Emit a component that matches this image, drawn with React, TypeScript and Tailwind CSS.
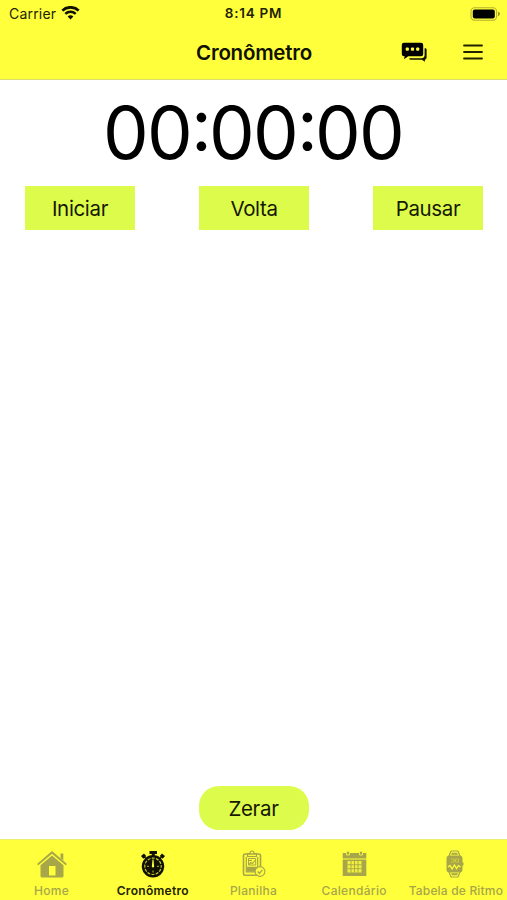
import type { ReactNode } from "react";

const GREY = "#a7a648";

function Wifi() {
  return (
    <svg width="19" height="15" viewBox="0 0 19 15" fill="none" stroke="#111100" className="ml-[5px]">
      <path d="M1.3 4.6a11.8 11.8 0 0 1 16.4 0" strokeWidth="2.7" />
      <path d="M4.3 7.9a7.5 7.5 0 0 1 10.4 0" strokeWidth="2.5" />
      <path d="M9.5 13.500 6.600 10.600a4.100 4.100 0 0 1 5.800 0z" fill="#111100" stroke="none" />
    </svg>
  );
}

function Battery() {
  return (
    <svg width="31" height="14" viewBox="0 0 31 14">
      <rect x="1" y="0.8" width="25.6" height="12.4" rx="3.6" fill="none" stroke="#b5b42c" strokeWidth="1.1" />
      <rect x="2.8" y="2.6" width="22" height="8.8" rx="1.8" fill="#000" />
      <path d="M28 4.8q2 .6 2 2.2t-2 2.2z" fill="#9b9a2c" />
    </svg>
  );
}

function Chat() {
  return (
    <svg width="26" height="20" viewBox="0 0 26 20">
      <path d="M3 .8h17q2.200 0 2.200 2.200v9q0 2.200-2.200 2.200H7.200L3 17.200l.7-3H3Q.8 14.200.8 12V3Q.8.8 3 .8z" fill="#000" />
      <path d="M23.600 6.200h1q1 .2 1 1.300v8q0 2-1.800 2.200l.3 2-3.400-2H9.800q-1.500 0-1.600-1.500h12.900q2.500-.2 2.500-2.600z" fill="#111100" />
      <g fill="#ffff3c">
        <rect x="4.700" y="5.500" width="3.200" height="3.200" rx="1" />
        <rect x="9.900" y="5.500" width="3.200" height="3.200" rx="1" />
        <rect x="15.100" y="5.500" width="3.200" height="3.200" rx="1" />
      </g>
    </svg>
  );
}

function Menu() {
  return (
    <svg width="20" height="16" viewBox="0 0 20 16" stroke="#222200" strokeWidth="1.8" strokeLinecap="round">
      <path d="M1 1.500h18M1 8h18M1 14.500h18" />
    </svg>
  );
}

function Home() {
  return (
    <svg width="32" height="28" viewBox="0 0 32 28" fill={GREY}>
      <path d="M1 14 16 1l15 13-1.300 1.300L16 3.700 2.300 15.300z" />
      <path d="M24.500 3.500h2.800v7l-2.800-2.400z" />
      <path d="M4.500 15.200 16 5.500l11.500 9.700V26q0 1.600-1.600 1.600H6.100q-1.600 0-1.600-1.600z" />
      <path d="M13 16h6.500v9.500H13z" fill="#ffff3c" />
    </svg>
  );
}

function Stopwatch() {
  return (
    <svg width="26" height="28" viewBox="0 0 26 28">
      <path d="M9.500 1h7.500v3h-2.200v2h-3V4H9.500z" fill="#111100" />
      <path d="m1 6 3-2.500L6.200 6 3.300 8.700zM25 6l-3-2.500L19.800 6l2.900 2.700z" fill="#111100" />
      <path d="m3.500 6 3 3M22.500 6l-3 3" stroke="#111100" strokeWidth="1.500" />
      <circle cx="13" cy="16.300" r="11.200" fill="#111100" />
      <circle cx="13" cy="16.300" r="8.200" fill="none" stroke="#c4c430" strokeWidth="1.200" strokeDasharray="3 1.293" strokeDashoffset="1.500" />
      <path d="M12.500 9.500h1l.6 6.800-1.100 1.600-1.100-1.600z" fill="#ffff3c" />
      <path d="M13 20.500v2M7 16.300h2M17 16.300h2" stroke="#b5b52a" />
    </svg>
  );
}

function Clipboard() {
  return (
    <svg width="24" height="28" viewBox="0 0 24 28" fill="none" stroke={GREY}>
      <path d="M16 25.300H3q-1.500 0-1.500-1.500V5.500Q1.500 4 3 4h14q1.500 0 1.500 1.500V17" strokeWidth="1.600" />
      <path d="M5.500 3.500h2.300q.2-2.500 2.200-2.500t2.200 2.500h2.300v3h-9z" strokeWidth="1.200" />
      <path d="M4.300 7v15h10M15.700 7v10" strokeWidth="1.200" />
      <path d="M5 16.800h10v2l-1.500 3H5z" fill={GREY} stroke="none" />
      <path d="M6.500 8.500h7.200v6.500H6.500z" strokeWidth="1" />
      <path d="m7 14.500 2-2 1.500 1 3-3.500M7 10.500h3" strokeWidth="1.100" />
      <circle cx="18" cy="21.500" r="4.900" fill="#ffff3c" strokeWidth="1.100" />
      <path d="m15.700 21.500 1.700 1.900 3-3.600" strokeWidth="1.300" />
    </svg>
  );
}

function Calendar() {
  return (
    <svg width="25" height="27" viewBox="0 0 25 27">
      <path d="M.7 3h23.600v5.600H.7zM.7 9.600h23.600V26H.7z" fill={GREY} />
      <path d="M5.500 11h14v11.500h-14z" fill="#f1f03e" />
      <path d="M5.500 14.800h14M5.500 18.700h14M9 11v11.500M12.500 11v11.500M16 11v11.500" stroke={GREY} strokeWidth=".9" />
      <path d="M4.500 5V2.500a1.500 1.500 0 0 1 3 0V5zM17.500 5V2.500a1.500 1.500 0 0 1 3 0V5z" fill={GREY} stroke="#ffff3c" strokeWidth=".8" />
    </svg>
  );
}

function Watch() {
  return (
    <svg width="19" height="28" viewBox="0 0 19 28">
      <path d="M4 6 5.800 1.500Q6 1 7 1h5q1 0 1.200.5L15 6M4 22l1.800 4.500q.2.500 1.200.5h5q1 0 1.200-.5L15 22" fill="none" stroke={GREY} strokeWidth="1.200" />
      <path d="M6 4.700 7 2.800h5l1 1.900zM6 23.300l1 1.900h5l1-1.900z" fill={GREY} />
      <rect x="1.500" y="5.500" width="16" height="17" rx="3" fill={GREY} />
      <path d="M17 12.500h1.500v3H17z" fill={GREY} />
      <path d="M6 9h3v3H6M10.500 9h3v3h-3z" fill="none" stroke="#d7d63d" strokeWidth=".8" />
      <path d="m3 17 2-1.500 2 3.500 2.500-4 2 3.500 2-3 2 1.500" fill="none" stroke="#ffff3c" strokeWidth="1.200" />
    </svg>
  );
}

function Tab({ icon, label, text }: { icon: ReactNode; label: string; text: string }) {
  return (
    <div className="flex w-[100.7px] shrink-0 flex-col items-center">
      <div className="flex h-[44px] items-center pt-[3px]">{icon}</div>
      <span className={`whitespace-nowrap text-[12px] leading-[14px] ${text}`}>{label}</span>
    </div>
  );
}

function ActionButton({ children, className = "" }: { children: ReactNode; className?: string }) {
  return (
    <button className={`flex h-[44px] w-[110px] items-center justify-center bg-[#ddfb4b] pt-[2px] text-[20.500px] leading-none tracking-[-0.350px] text-[#151900] ${className}`}>
      {children}
    </button>
  );
}

function Digits({ value }: { value: string }) {
  return <span className="flex w-[90px] justify-center tracking-[-1.700px]">{value}</span>;
}

function Colon() {
  return <span className="mr-px -ml-px flex w-[16px] justify-center pb-[16px] tracking-[-5px]">:</span>;
}

export default function App() {
  return (
    <div className="flex h-[900px] w-[507px] flex-col overflow-hidden bg-white font-['Inter','Liberation_Sans',sans-serif]">
      <header className="h-[80px] border-b border-[#dcdc70] bg-[#ffff3c]">
        <div className="grid h-[27px] grid-cols-3 items-center text-[#222200]">
          <div className="flex items-center pl-[9px]">
            <span className="text-[14px] tracking-[0.200px]">Carrier</span>
            <Wifi />
          </div>
          <span className="text-center text-[13.500px] font-semibold tracking-[0.750px]">8:14 PM</span>
          <div className="flex justify-end pr-[6px]"><Battery /></div>
        </div>
        <div className="grid h-[50px] grid-cols-3 items-center">
          <h1 className="col-start-2 pt-[2px] pl-px text-center text-[20.500px] font-semibold tracking-[-0.250px] text-[#111100]">Cronômetro</h1>
          <div className="flex items-center justify-end gap-[36px] pr-[24px]">
            <Chat />
            <Menu />
          </div>
        </div>
      </header>
      <main className="flex flex-1 flex-col items-center">
        <div className="mt-[17px] flex h-[72px] items-center justify-center pr-px text-[72.500px] leading-[72px] text-black">
          <Digits value="00" />
          <Colon />
          <Digits value="00" />
          <Colon />
          <Digits value="00" />
        </div>
        <div className="mt-[17px] flex w-full justify-between pr-[24px] pl-[25px]">
          <ActionButton>Iniciar</ActionButton>
          <ActionButton>Volta</ActionButton>
          <ActionButton>Pausar</ActionButton>
        </div>
        <ActionButton className="mt-auto mb-[9px] rounded-[20px]">Zerar</ActionButton>
      </main>
      <nav className="flex h-[61px] justify-center border-t border-[#eded70] bg-[#ffff3c]">
        <Tab icon={<Home />} label="Home" text="font-medium tracking-[0.300px] text-[#a7a648] pr-px" />
        <Tab icon={<Stopwatch />} label="Cronômetro" text="font-semibold tracking-[0.300px] text-[#222200]" />
        <Tab icon={<Clipboard />} label="Planilha" text="font-medium tracking-[0.300px] text-[#a7a648]" />
        <Tab icon={<Calendar />} label="Calendário" text="font-medium tracking-[0.300px] text-[#a7a648]" />
        <Tab icon={<Watch />} label="Tabela de Ritmo" text="font-medium tracking-[0.180px] text-[#a7a648] pl-[2px]" />
      </nav>
    </div>
  );
}
